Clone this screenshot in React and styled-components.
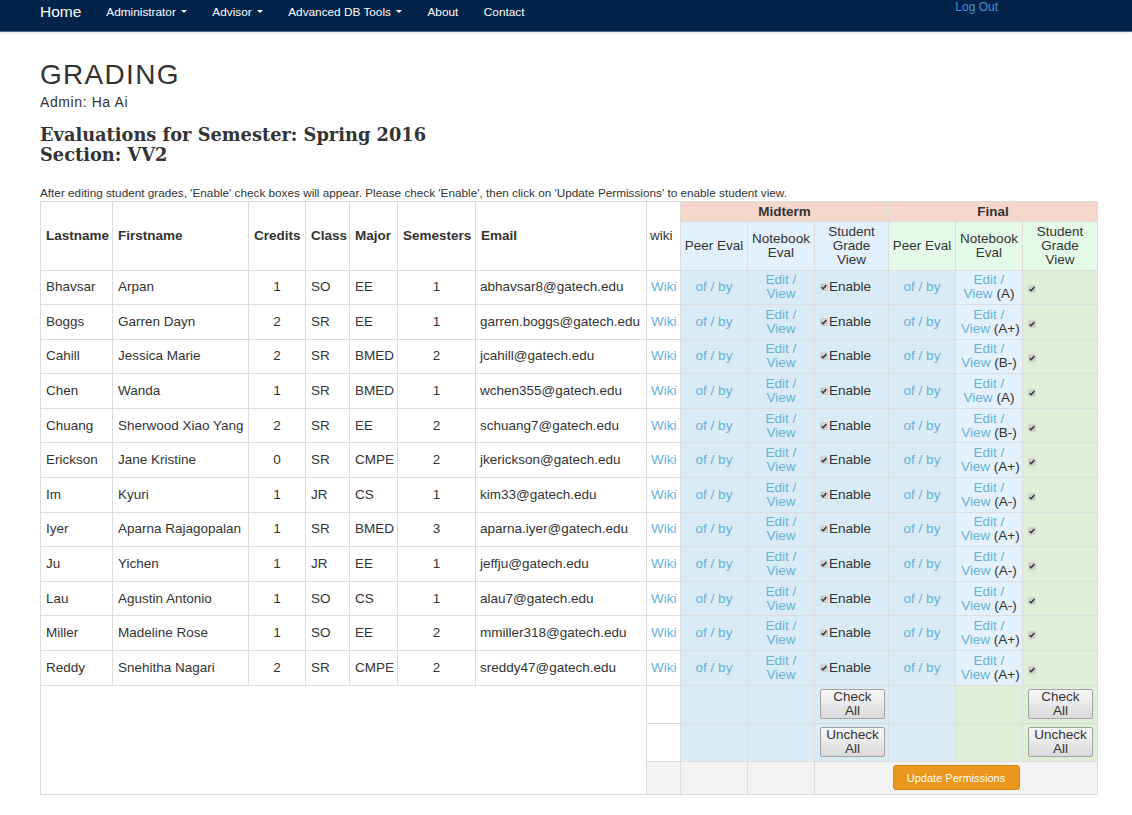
import React from 'react';
import styled, { createGlobalStyle } from 'styled-components';

const GlobalStyle = createGlobalStyle`
  html, body { margin: 0; padding: 0; background: #fff; }
  body { font-family: "Liberation Sans", Arial, sans-serif; color: #333; }
`;

const NavBar = styled.nav`
  display: flex;
  align-items: flex-start;
  height: 31px;
  background: #01234a;
  border-bottom: 1px solid #4b6584;
  box-shadow: 0 1px 2px rgba(0, 0, 0, 0.12);
  padding-left: 40px;
`;

const Brand = styled.a`
  font-size: 15.5px;
  line-height: 16px;
  padding-top: 3.5px;
  color: #fff;
  text-decoration: none;
  margin-right: 25px;
`;

const NavList = styled.div`
  display: flex;
  gap: 25.5px;
  padding-top: 4.5px;
`;

const NavItem = styled.a`
  font-size: 11.8px;
  line-height: 14px;
  color: #fff;
  text-decoration: none;
  display: inline-flex;
  align-items: center;
`;

const Caret = styled.span`
  display: inline-block;
  width: 0;
  height: 0;
  margin-left: 5px;
  border-top: 3px solid #fff;
  border-left: 3px solid transparent;
  border-right: 3px solid transparent;
`;

const LogOut = styled.a`
  margin-left: auto;
  margin-right: 134px;
  font-size: 12px;
  line-height: 14px;
  color: #4a90cf;
  text-decoration: none;
`;

const Main = styled.main`
  padding: 0 35px 20px 40px;
`;

const Title = styled.h1`
  margin: 26px 0 0;
  font-size: 28px;
  line-height: 33px;
  letter-spacing: 1.3px;
  font-weight: normal;
  color: #333;
`;

const Admin = styled.div`
  margin-top: 3px;
  font-size: 14px;
  line-height: 17px;
  letter-spacing: 0.6px;
`;

const Heading = styled.h3`
  margin: 14px 0 0;
  font-family: "DejaVu Serif", "Liberation Serif", serif;
  font-weight: bold;
  font-size: 17.8px;
  line-height: 20px;
  color: #333;
`;

const Note = styled.p`
  margin: 21px 0 0;
  font-size: 11.75px;
  line-height: 13px;
  color: #333;
`;

const Table = styled.table`
  margin-top: 1.5px;
  width: 1057px;
  table-layout: fixed;
  border-collapse: collapse;
  border: 1px solid #ddd;
  font-size: 13.5px;
  color: #333;
`;

const Th = styled.th`
  border: 1px solid #ddd;
  padding: 3px ${p => (p.$tight ? '3px' : '5px')};
  line-height: 13.75px;
  vertical-align: middle;
  text-align: ${p => p.$align || 'left'};
  font-weight: ${p => (p.$bold ? 'bold' : 'normal')};
  background: ${p => p.$bg || '#fff'};
  white-space: ${p => (p.$nowrap ? 'nowrap' : 'normal')};
  overflow: visible;
`;

const Td = styled.td`
  border: 1px solid #ddd;
  padding: ${p => (p.$pad ? p.$pad : '2.8px 5px')};
  line-height: 14px;
  vertical-align: middle;
  text-align: ${p => p.$align || 'left'};
  background: ${p => p.$bg || '#fff'};
  white-space: nowrap;
  overflow: visible;
`;

const Link = styled.a`
  color: #67b2d9;
  text-decoration: none;
`;

const Box = styled.span`
  display: inline-block;
  width: 8px;
  height: 8px;
  border-radius: 2px;
  background: #cfcfcf;
  vertical-align: ${p => (p.$low ? '-2px' : '0px')};
  margin-right: 1px;
  position: relative;
  svg { position: absolute; left: 0; top: 0; }
`;

const GrayButton = styled.button`
  display: block;
  width: 65px;
  height: 30px;
  padding: 0;
  font-family: "Liberation Sans", Arial, sans-serif;
  font-size: 13.5px;
  line-height: 14px;
  color: #333;
  background: linear-gradient(#f7f7f7, #dadada);
  border: 1px solid #a3a3a3;
  border-radius: 2px;
`;

const OrangeButton = styled.button`
  width: 127px;
  height: 25px;
  padding: 0;
  font-family: "Liberation Sans", Arial, sans-serif;
  font-size: 11px;
  color: #fff;
  background: #eb961d;
  border: 1px solid #d8861a;
  border-radius: 3px;
`;

const C = {
  head: '#f4d6ca',
  midHead: '#e3f1fc',
  finHead: '#e5fbea',
  info: '#d9ebf5',
  light: '#e3f1fc',
  green: '#dfefd7',
  gray: '#f3f3f3',
};

const widths = [72, 136, 57, 44, 48, 78, 171, 34, 67, 67, 74, 67, 67, 75];

const rows = [
  ['Bhavsar', 'Arpan', 1, 'SO', 'EE', 1, 'abhavsar8@gatech.edu', 'A'],
  ['Boggs', 'Garren Dayn', 2, 'SR', 'EE', 1, 'garren.boggs@gatech.edu', 'A+'],
  ['Cahill', 'Jessica Marie', 2, 'SR', 'BMED', 2, 'jcahill@gatech.edu', 'B-'],
  ['Chen', 'Wanda', 1, 'SR', 'BMED', 1, 'wchen355@gatech.edu', 'A'],
  ['Chuang', 'Sherwood Xiao Yang', 2, 'SR', 'EE', 2, 'schuang7@gatech.edu', 'B-'],
  ['Erickson', 'Jane Kristine', 0, 'SR', 'CMPE', 2, 'jkerickson@gatech.edu', 'A+'],
  ['Im', 'Kyuri', 1, 'JR', 'CS', 1, 'kim33@gatech.edu', 'A-'],
  ['Iyer', 'Aparna Rajagopalan', 1, 'SR', 'BMED', 3, 'aparna.iyer@gatech.edu', 'A+'],
  ['Ju', 'Yichen', 1, 'JR', 'EE', 1, 'jeffju@gatech.edu', 'A-'],
  ['Lau', 'Agustin Antonio', 1, 'SO', 'CS', 1, 'alau7@gatech.edu', 'A-'],
  ['Miller', 'Madeline Rose', 1, 'SO', 'EE', 2, 'mmiller318@gatech.edu', 'A+'],
  ['Reddy', 'Snehitha Nagari', 2, 'SR', 'CMPE', 2, 'sreddy47@gatech.edu', 'A+'],
];

function Check({ low }) {
  return (
    <Box $low={low}>
      <svg width="8" height="8" viewBox="0 0 8 8">
        <path d="M1.6 4.2 L3.2 5.8 L6.4 2" fill="none" stroke="#333" strokeWidth="1.4" />
      </svg>
    </Box>
  );
}

export default function App() {
  return (
    <>
      <GlobalStyle />
      <NavBar>
        <Brand href="#">Home</Brand>
        <NavList>
          <NavItem href="#">Administrator<Caret /></NavItem>
          <NavItem href="#">Advisor<Caret /></NavItem>
          <NavItem href="#">Advanced DB Tools<Caret /></NavItem>
          <NavItem href="#">About</NavItem>
          <NavItem href="#">Contact</NavItem>
        </NavList>
        <LogOut href="#">Log Out</LogOut>
      </NavBar>
      <Main>
        <Title>GRADING</Title>
        <Admin>Admin: Ha Ai</Admin>
        <Heading>
          Evaluations for Semester: Spring 2016
          <br />
          Section: VV2
        </Heading>
        <Note>
          After editing student grades, 'Enable' check boxes will appear. Please check 'Enable', then click on
          'Update Permissions' to enable student view.
        </Note>
        <Table>
          <colgroup>
            {widths.map((w, i) => (
              <col key={i} style={{ width: w }} />
            ))}
          </colgroup>
          <thead>
            <tr>
              <Th rowSpan={2} $bold>Lastname</Th>
              <Th rowSpan={2} $bold>Firstname</Th>
              <Th rowSpan={2} $bold>Credits</Th>
              <Th rowSpan={2} $bold>Class</Th>
              <Th rowSpan={2} $bold>Major</Th>
              <Th rowSpan={2} $bold>Semesters</Th>
              <Th rowSpan={2} $bold>Email</Th>
              <Th rowSpan={2} $tight>wiki</Th>
              <Th colSpan={3} $bold $align="center" $bg={C.head}>Midterm</Th>
              <Th colSpan={3} $bold $align="center" $bg={C.head}>Final</Th>
            </tr>
            <tr>
              <Th $align="center" $bg={C.midHead} $tight $nowrap>Peer Eval</Th>
              <Th $align="center" $bg={C.midHead} $tight>Notebook<br />Eval</Th>
              <Th $align="center" $bg={C.midHead} $tight>Student<br />Grade<br />View</Th>
              <Th $align="center" $bg={C.finHead} $tight $nowrap>Peer Eval</Th>
              <Th $align="center" $bg={C.finHead} $tight>Notebook<br />Eval</Th>
              <Th $align="center" $bg={C.finHead} $tight>Student<br />Grade<br />View</Th>
            </tr>
          </thead>
          <tbody>
            {rows.map(r => (
              <tr key={r[0]}>
                <Td>{r[0]}</Td>
                <Td>{r[1]}</Td>
                <Td $align="center">{r[2]}</Td>
                <Td>{r[3]}</Td>
                <Td>{r[4]}</Td>
                <Td $align="center">{r[5]}</Td>
                <Td $pad="2.8px 4px">{r[6]}</Td>
                <Td $pad="2.8px 4px"><Link href="#">Wiki</Link></Td>
                <Td $align="center" $bg={C.info}><Link href="#">of / by</Link></Td>
                <Td $align="center" $bg={C.info}>
                  <Link href="#">Edit /<br />View</Link>
                </Td>
                <Td $bg={C.info}><Check />Enable</Td>
                <Td $align="center" $bg={C.info}><Link href="#">of / by</Link></Td>
                <Td $align="center" $bg={C.light}>
                  <Link href="#">Edit /</Link>
                  <br />
                  <Link href="#">View</Link> ({r[7]})
                </Td>
                <Td $bg={C.green}><Check low /></Td>
              </tr>
            ))}
            <tr>
              <Td colSpan={7} rowSpan={3} />
              <Td />
              <Td $bg={C.info} />
              <Td $bg={C.info} />
              <Td $bg={C.info} $pad="3.5px 5px"><GrayButton>Check<br />All</GrayButton></Td>
              <Td $bg={C.info} />
              <Td $bg={C.green} />
              <Td $bg={C.green} $pad="3.5px 5px"><GrayButton>Check<br />All</GrayButton></Td>
            </tr>
            <tr>
              <Td />
              <Td $bg={C.info} />
              <Td $bg={C.info} />
              <Td $bg={C.info} $pad="3.5px 5px"><GrayButton>Uncheck<br />All</GrayButton></Td>
              <Td $bg={C.info} />
              <Td $bg={C.green} />
              <Td $bg={C.green} $pad="3.5px 5px"><GrayButton>Uncheck<br />All</GrayButton></Td>
            </tr>
            <tr>
              <Td $bg={C.gray} />
              <Td $bg={C.gray} />
              <Td $bg={C.gray} />
              <Td colSpan={4} $align="center" $bg={C.gray} $pad="3.5px 5px">
                <OrangeButton>Update Permissions</OrangeButton>
              </Td>
            </tr>
          </tbody>
        </Table>
      </Main>
    </>
  );
}
